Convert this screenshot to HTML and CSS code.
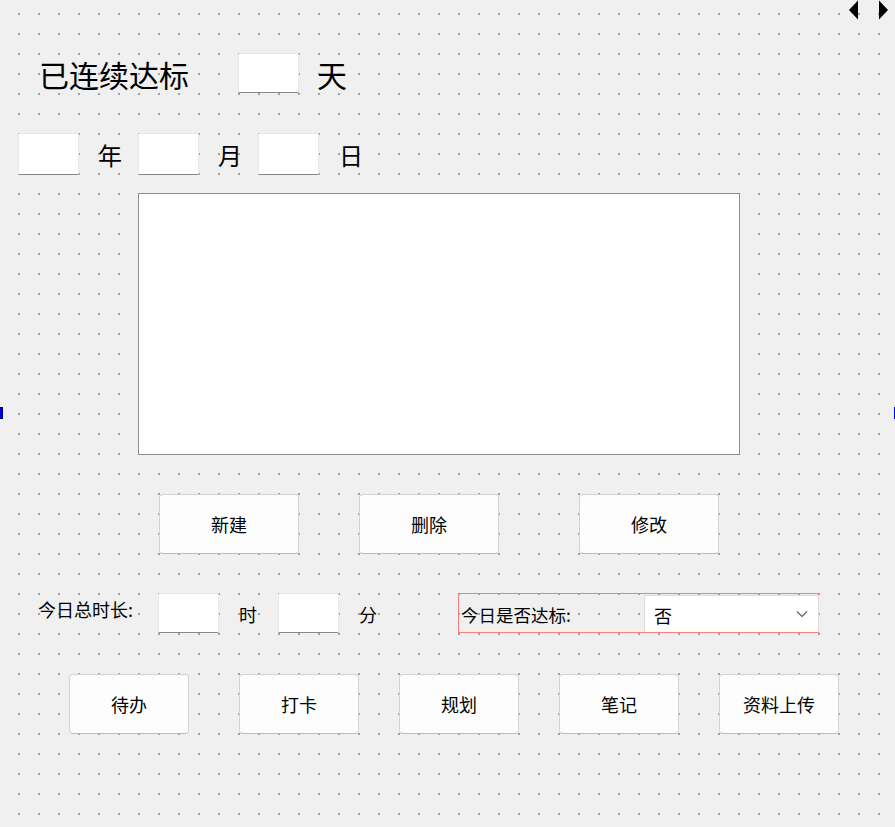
FILE: index.html
```html
<!DOCTYPE html>
<html lang="zh-CN">
<head>
<meta charset="utf-8">
<title>打卡</title>
<link rel="stylesheet" href="styles.css">
</head>
<body>
<div class="form">
  <svg class="nav-arrows" width="50" height="20" viewBox="0 0 50 20">
    <polygon points="13,0.5 4,10 13,19.5" fill="#000"/>
    <polygon points="34,0.5 43,10 34,19.5" fill="#000"/>
  </svg>
  <div class="handle handle-left"></div>
  <div class="handle handle-right"></div>

  <div class="row row-streak">
    <span class="title">已连续达标</span>
    <div class="edit edit-streak"></div>
    <span class="title-unit">天</span>
  </div>

  <div class="row row-date">
    <div class="edit edit-date"></div>
    <span class="date-unit">年</span>
    <div class="edit edit-date"></div>
    <span class="date-unit">月</span>
    <div class="edit edit-date"></div>
    <span class="date-unit date-unit-last">日</span>
  </div>

  <div class="row row-text">
    <div class="text-area"></div>
  </div>

  <div class="row row-actions">
    <button class="btn btn-action btn-new">新建</button>
    <button class="btn btn-action btn-del">删除</button>
    <button class="btn btn-action btn-edit">修改</button>
  </div>

  <div class="row row-time">
    <span class="time-label">今日总时长:</span>
    <div class="edit edit-time"></div>
    <span class="time-unit">时</span>
    <div class="edit edit-time"></div>
    <span class="time-unit">分</span>
    <div class="goal-frame">
      <span class="goal-label">今日是否达标:</span>
      <div class="combo">
        <span class="combo-text">否</span>
        <svg class="combo-arrow" width="12" height="8" viewBox="0 0 12 8">
          <polyline points="1,1.5 6,6.5 11,1.5" fill="none" stroke="#5a5a5a" stroke-width="1.1"/>
        </svg>
      </div>
    </div>
  </div>

  <div class="row row-nav">
    <button class="btn btn-nav btn-todo">待办</button>
    <button class="btn btn-nav">打卡</button>
    <button class="btn btn-nav">规划</button>
    <button class="btn btn-nav">笔记</button>
    <button class="btn btn-nav">资料上传</button>
  </div>
</div>
</body>
</html>
```

FILE: styles.css
```css
html, body {
  margin: 0;
  padding: 0;
}

body {
  width: 895px;
  height: 827px;
  overflow: hidden;
  background-color: #f0f0f0;
  background-image: conic-gradient(from 270deg at 2px 2px, #a0a0a0 25%, transparent 0);
  background-size: 20px 20px;
  background-position: 18px 13px;
  font-family: "Noto Sans CJK SC", "Noto Sans", sans-serif;
  color: #000;
}

.form {
  position: relative;
  width: 895px;
  height: 827px;
  box-sizing: border-box;
  padding-top: 53px;
}

.nav-arrows {
  position: absolute;
  left: 845px;
  top: 0;
}

.handle {
  position: absolute;
  top: 407px;
  height: 11px;
  background: #0000e6;
}

.handle-left {
  left: 0;
  width: 2px;
  border: 1px solid #000080;
  border-left: none;
  height: 10px;
}

.handle-right {
  left: 894px;
  width: 1px;
  height: 12px;
}

.row {
  display: flex;
  align-items: center;
}

.edit {
  background: #fff;
  box-sizing: border-box;
  border: 1px solid #e8e8e8;
  border-bottom-color: #878787;
  border-radius: 2px 2px 0 0;
}

/* streak row */
.row-streak {
  height: 39px;
  padding-left: 39px;
}

.title {
  font-size: 30px;
  line-height: 1;
  width: 199px;
  padding-top: 3px;
}

.edit-streak {
  width: 61px;
  height: 40px;
}

.title-unit {
  font-size: 30px;
  line-height: 1;
  margin-left: 18px;
  padding-top: 3px;
}

/* date row */
.row-date {
  margin-top: 41px;
  height: 41px;
  padding-left: 18px;
}

.edit-date {
  width: 61px;
  height: 42px;
}

.date-unit {
  font-size: 24px;
  line-height: 1;
  width: 59px;
  padding-left: 19px;
  box-sizing: border-box;
  padding-top: 2px;
}

.date-unit-last {
  padding-left: 20px;
}

/* text area */
.row-text {
  margin-top: 19px;
  padding-left: 138px;
}

.text-area {
  width: 602px;
  height: 262px;
  box-sizing: border-box;
  background: #fff;
  border: 1px solid #8b8e96;
}

/* buttons */
.btn {
  font-family: "Noto Sans CJK SC", "Noto Sans", sans-serif;
  font-size: 18px;
  color: #000;
  background: #fdfdfd;
  border: 1px solid #d3d3d3;
  border-bottom-color: #bcbcbc;
  border-radius: 4px;
  box-sizing: border-box;
  padding: 0;
  margin: 0;
  line-height: 1;
}

.row-actions {
  margin-top: 39px;
  height: 60px;
  padding-left: 159px;
}

.btn-action {
  width: 140px;
  height: 60px;
}

.btn-del {
  margin-left: 60px;
}

.btn-edit {
  margin-left: 80px;
}

/* time row */
.row-time {
  margin-top: 39px;
  height: 40px;
  padding-left: 38px;
}

.time-label {
  font-size: 18px;
  line-height: 1;
  width: 120px;
  align-self: flex-start;
  padding-top: 7px;
}

.edit-time {
  width: 61px;
  height: 40px;
}

.time-unit {
  font-size: 18px;
  line-height: 1;
  width: 59px;
  padding-left: 20px;
  box-sizing: border-box;
  padding-top: 1px;
}

.goal-frame {
  margin-left: 60px;
  width: 361px;
  height: 40px;
  box-sizing: border-box;
  border: 1px solid #ff7a7a;
  display: flex;
  align-items: flex-end;
  position: relative;
}

.goal-label {
  font-size: 17.5px;
  line-height: 1;
  margin-left: 2px;
  width: 183px;
  align-self: center;
  padding-top: 4px;
}

.combo {
  width: 175px;
  height: 37px;
  box-sizing: border-box;
  background: #fff;
  border: 1px solid #dcdcdc;
  border-bottom: none;
  margin-right: -1px;
  display: flex;
  align-items: center;
  justify-content: space-between;
  padding: 0 10px 0 9px;
}

.combo-text {
  font-size: 18px;
  line-height: 1;
  padding-top: 2px;
}

/* nav row */
.row-nav {
  margin-top: 41px;
  height: 60px;
  padding-left: 69px;
}

.btn-nav {
  width: 120px;
  height: 60px;
  margin-left: 40px;
}

.btn-todo {
  margin-right: 10px;
  margin-left: 0;
}
```
